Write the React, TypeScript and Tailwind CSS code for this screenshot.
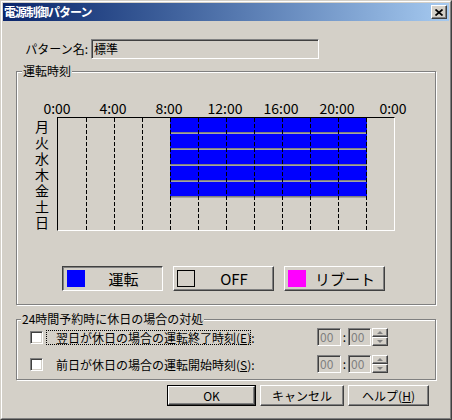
import type { ReactNode } from "react";

/* ── Win2000 風の枠線 ───────────────────────────── */
const raised =
  "border border-t-white border-l-white border-r-[#404040] border-b-[#404040] shadow-[inset_-1px_-1px_0_#808080]";
const pressed =
  "border border-t-[#404040] border-l-[#404040] border-r-white border-b-white shadow-[inset_1px_1px_0_#808080]";
const sunken =
  "border border-t-[#808080] border-l-[#808080] border-r-white border-b-white shadow-[inset_1px_1px_0_#404040,inset_-1px_-1px_0_#d4d0c8]";
const groupBox =
  "relative ml-[13px] w-[420px] border border-[#808080] shadow-[inset_1px_1px_0_#fff,1px_1px_0_#fff]";

const HOURS = ["0:00", "4:00", "8:00", "12:00", "16:00", "20:00", "0:00"];

/* ── 運転時刻チャート ───────────────────────────── */
function ScheduleChart() {
  const px = 14; // 1時間あたりの幅
  return (
    <div className="h-[114px] w-[338px] border border-t-black border-l-black border-r-white border-b-white">
      <svg width={336} height={112} shapeRendering="crispEdges" className="block">
        {[0, 1, 2, 3, 4].map((i) => (
          <g key={i}>
            <rect x={8 * px} y={i * 16} width={197} height={14} fill="#0000ff" />
            <rect x={8 * px} y={i * 16 + 14} width={197} height={1} fill="#808080" />
            <rect x={8 * px} y={i * 16 + 15} width={197} height={1} fill="#a4a4a4" />
          </g>
        ))}
        {Array.from({ length: 11 }, (_, k) => (
          <line
            key={k}
            x1={28 * (k + 1) + 0.5}
            x2={28 * (k + 1) + 0.5}
            y1={0}
            y2={112}
            stroke="#000"
            strokeDasharray="4 2"
          />
        ))}
      </svg>
    </div>
  );
}

function LegendButton({
  color,
  label,
  active,
}: {
  color: string | null;
  label: string;
  active?: boolean;
}) {
  return (
    <div
      className={`flex h-[25px] w-[101px] items-center ${active ? "pl-[4px] " + pressed : "pl-[3px] " + raised}`}
    >
      {color ? (
        <div className="h-[17px] w-[18px]" style={{ backgroundColor: color }} />
      ) : (
        <div className="h-[17px] w-[18px] border border-black" />
      )}
      <span className="flex-1 text-center text-[15px] leading-[17px]">{label}</span>
    </div>
  );
}

function TimeBox({ w }: { w: string }) {
  return (
    <div className={`${w} flex h-[18px] items-center bg-[#d4d0c8] pl-[2px] text-[12px] text-[#808080] ${sunken}`}>
      00
    </div>
  );
}

function Spin() {
  return (
    <div className="ml-[1px] flex w-[16px] flex-col">
      <div className={`flex h-[9px] items-center justify-center ${raised}`}>
        <div className="h-0 w-0 border-x-[3px] border-b-[3px] border-x-transparent border-b-[#808080]" />
      </div>
      <div className={`flex h-[9px] items-center justify-center ${raised}`}>
        <div className="h-0 w-0 border-x-[3px] border-t-[3px] border-x-transparent border-t-[#808080]" />
      </div>
    </div>
  );
}

function HolidayRow({ label, focused, top }: { label: ReactNode; focused?: boolean; top: string }) {
  return (
    <div className={`${top} flex h-[18px] items-center`}>
      <div className={`ml-[13px] h-[13px] w-[13px] shrink-0 bg-white ${sunken}`} />
      <div
        className={`ml-[3px] flex h-[15px] w-[205px] shrink-0 items-center border border-dotted pl-[9px] text-[12px] leading-[13px] ${
          focused ? "border-black" : "border-transparent"
        }`}
      >
        <span className="whitespace-nowrap">{label}</span>
      </div>
      <div className="ml-[66px] flex items-center">
        <TimeBox w="w-[24px]" />
        <span className="w-[7px] text-center text-[12px]">:</span>
        <TimeBox w="w-[23px]" />
        <Spin />
      </div>
    </div>
  );
}

export default function App() {
  return (
    <div className="h-[420px] w-[452px] border border-t-[#d4d0c8] border-l-[#d4d0c8] border-r-[#404040] border-b-[#404040] bg-[#d4d0c8] font-['Noto_Sans_CJK_JP',sans-serif] text-black">
      <div className="flex h-full flex-col border border-t-white border-l-white border-r-[#808080] border-b-[#808080] p-px">
        {/* タイトルバー */}
        <div className="flex h-[18px] shrink-0 items-center justify-between bg-linear-to-r from-[#0a246a] to-[#a6caf0] pl-[1px] pr-[2px]">
          <span className="text-[12px] font-bold leading-none tracking-[-1px] text-white">電源制御パターン</span>
          <div className={`flex h-[14px] w-[16px] items-center justify-center bg-[#d4d0c8] ${raised}`}>
            <svg width="8" height="7" viewBox="0 0 8 7">
              <path d="M0.5 0.5 L7.5 6.5 M7.5 0.5 L0.5 6.5" stroke="#000" strokeWidth="1.7" />
            </svg>
          </div>
        </div>

        {/* パターン名 */}
        <div className="mt-[18px] flex items-center">
          <span className="w-[85px] text-right text-[12px] leading-[14px]">パターン名:</span>
          <div className={`ml-[3px] flex h-[20px] w-[228px] items-center bg-[#d4d0c8] pl-[2px] text-[12px] ${sunken}`}>
            標準
          </div>
        </div>

        {/* 運転時刻 */}
        <div className={`${groupBox} mt-[12px] h-[234px]`}>
          <span className="absolute -top-[8px] left-[5px] bg-[#d4d0c8] px-[1px] text-[12px] leading-[14px]">運転時刻</span>
          <div className="ml-[12px] mt-[28px] flex">
            {HOURS.map((h, i) => (
              <span key={i} className="w-[56px] text-center text-[14px] leading-[16px]">
                {h}
              </span>
            ))}
          </div>
          <div className="mt-[1px] flex">
            <div className="ml-[18px] w-[22px] pt-[1px]">
              <p className="w-[14px] break-all text-[14px] leading-[16px]">月火水木金土日</p>
            </div>
            <ScheduleChart />
          </div>
          <div className="ml-[45px] mt-[35px] flex gap-[10px]">
            <LegendButton color="#0000ff" label="運転" active />
            <LegendButton color={null} label="OFF" />
            <LegendButton color="#ff00ff" label="リブート" />
          </div>
        </div>

        {/* 24時間予約時に休日の場合の対処 */}
        <div className={`${groupBox} mt-[14px] h-[61px]`}>
          <span className="absolute -top-[8px] left-[4px] whitespace-nowrap bg-[#d4d0c8] px-[1px] text-[12px] leading-[14px]">
            24時間予約時に休日の場合の対処
          </span>
          <HolidayRow
            top="mt-[8px]"
            focused
            label={
              <>
                翌日が休日の場合の運転終了時刻(<span className="underline">E</span>):
              </>
            }
          />
          <HolidayRow
            top="mt-[9px]"
            label={
              <>
                前日が休日の場合の運転開始時刻(<span className="underline">S</span>):
              </>
            }
          />
        </div>

        {/* ボタン */}
        <div className="ml-[164px] mt-[5px] flex text-[12px]">
          <div className="h-[21px] w-[89px] border border-black">
            <div className={`flex h-full items-center justify-center ${raised}`}>OK</div>
          </div>
          <div className={`ml-[4px] flex h-[21px] w-[84px] items-center justify-center ${raised}`}>キャンセル</div>
          <div className={`ml-[4px] flex h-[21px] w-[81px] items-center justify-center ${raised}`}>
            ヘルプ(<span className="underline">H</span>)
          </div>
        </div>
      </div>
    </div>
  );
}
